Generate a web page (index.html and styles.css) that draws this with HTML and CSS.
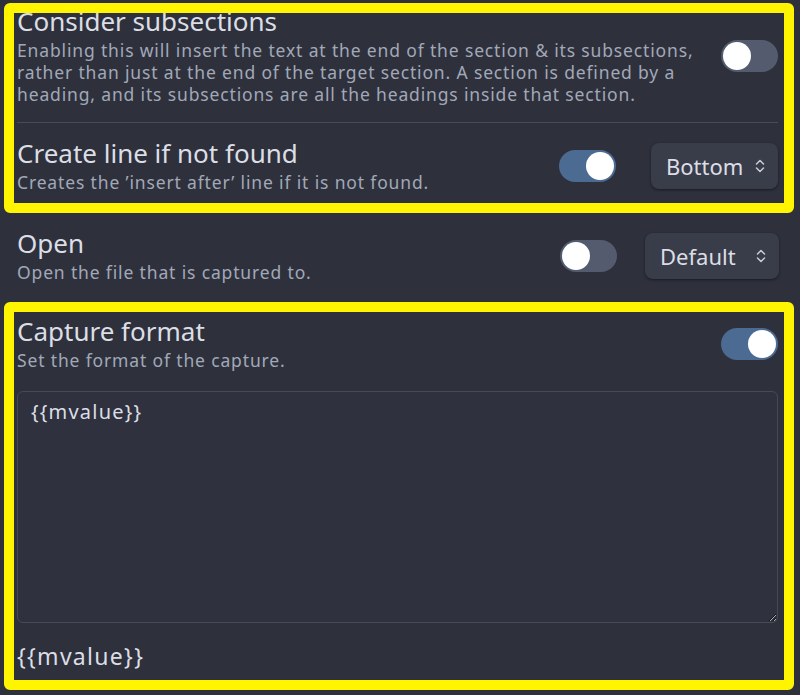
FILE: index.html
```html
<!DOCTYPE html>
<html>
<head>
<meta charset="utf-8">
<link rel="stylesheet" href="styles.css">
</head>
<body>
<div class="page">
  <div class="hl hl-top">
    <div class="setting first">
      <div class="info">
        <div class="name">Consider subsections</div>
        <div class="desc">Enabling this will insert the text at the end of the section &amp; its subsections,<br>rather than just at the end of the target section. A section is defined by a<br>heading, and its subsections are all the headings inside that section.</div>
      </div>
      <div class="controls"><span class="toggle"></span></div>
    </div>
    <div class="setting second">
      <div class="info">
        <div class="name">Create line if not found</div>
        <div class="desc">Creates the ’insert after’ line if it is not found.</div>
      </div>
      <div class="controls">
        <span class="toggle on"></span>
        <div class="dropdown dd-bottom">Bottom<svg class="chev" width="10" height="16" viewBox="0 0 10 16"><path d="M1.5 6 L5 2.5 L8.5 6 M1.5 10 L5 13.5 L8.5 10" fill="none" stroke="#c9ccd6" stroke-width="1.5" stroke-linecap="round" stroke-linejoin="round"/></svg></div>
      </div>
    </div>
  </div>
  <div class="setting open">
    <div class="info">
      <div class="name">Open</div>
      <div class="desc">Open the file that is captured to.</div>
    </div>
    <div class="controls">
      <span class="toggle"></span>
      <div class="dropdown dd-default">Default<svg class="chev" width="10" height="16" viewBox="0 0 10 16"><path d="M1.5 6 L5 2.5 L8.5 6 M1.5 10 L5 13.5 L8.5 10" fill="none" stroke="#c9ccd6" stroke-width="1.5" stroke-linecap="round" stroke-linejoin="round"/></svg></div>
    </div>
  </div>
  <div class="hl hl-bottom">
    <div class="setting capture">
      <div class="info">
        <div class="name">Capture format</div>
        <div class="desc">Set the format of the capture.</div>
      </div>
      <div class="controls"><span class="toggle on"></span></div>
    </div>
    <textarea class="format" readonly>{{mvalue}}</textarea>
    <div class="preview">{{mvalue}}</div>
  </div>
</div>
</body>
</html>
```
FILE: styles.css
```css
html, body {
  margin: 0;
  background: #2e313c;
}
body {
  font-family: "Noto Sans", "DejaVu Sans", sans-serif;
  color: #dcdee5;
}
.page {
  padding: 3px 6px 0 4px;
}
.hl {
  border: 10px solid #fff500;
  border-radius: 6px;
  overflow: hidden;
  padding: 0 6px 0 3px;
}
.setting {
  display: flex;
  align-items: center;
  gap: 24px;
}
.info {
  flex: 1;
  min-width: 0;
}
.name {
  font-size: 26px;
  line-height: 30px;
  white-space: nowrap;
}
.desc {
  font-size: 17.5px;
  line-height: 22px;
  letter-spacing: 0.85px;
  color: #a2a8b8;
  margin-top: 3px;
  white-space: nowrap;
}
.controls {
  display: flex;
  align-items: center;
  gap: 35px;
}
.open .controls {
  gap: 28px;
}
.toggle {
  display: block;
  position: relative;
  width: 57px;
  height: 32px;
  border-radius: 16px;
  background: #545b6e;
}
.toggle::after {
  content: "";
  position: absolute;
  left: 2px;
  top: 2px;
  width: 28px;
  height: 28px;
  border-radius: 50%;
  background: #ffffff;
}
.toggle.on {
  background: #4c6b92;
}
.toggle.on::after {
  left: 27px;
}
.dropdown {
  box-sizing: border-box;
  display: flex;
  align-items: center;
  justify-content: space-between;
  height: 46px;
  padding: 0 13px 0 15px;
  border-radius: 8px;
  background: #393d4a;
  box-shadow: 0 1px 3px rgba(0, 0, 0, 0.45);
  font-size: 22px;
  color: #dcdee5;
}
.dd-bottom {
  width: 127px;
}
.dd-default {
  width: 134px;
}
.first {
  margin-top: -7px;
  padding-bottom: 17px;
  border-bottom: 1px solid #474b58;
}
.second {
  padding: 15px 0 10px;
}
.open {
  padding: 15px 15px 19px 13px;
}
.capture {
  padding-top: 4px;
}
.format {
  display: block;
  box-sizing: border-box;
  width: 100%;
  height: 232px;
  margin-top: 20px;
  padding: 7px 13px;
  background: #2f323e;
  border: 1px solid #464a57;
  border-radius: 6px;
  color: #dcdee5;
  font-family: "Noto Sans", "DejaVu Sans", sans-serif;
  font-size: 20px;
  line-height: 26px;
  letter-spacing: 1.2px;
  outline: none;
}
.preview {
  font-size: 23px;
  line-height: 30px;
  letter-spacing: 1.3px;
  margin-top: 18px;
  padding-bottom: 9px;
}
```
